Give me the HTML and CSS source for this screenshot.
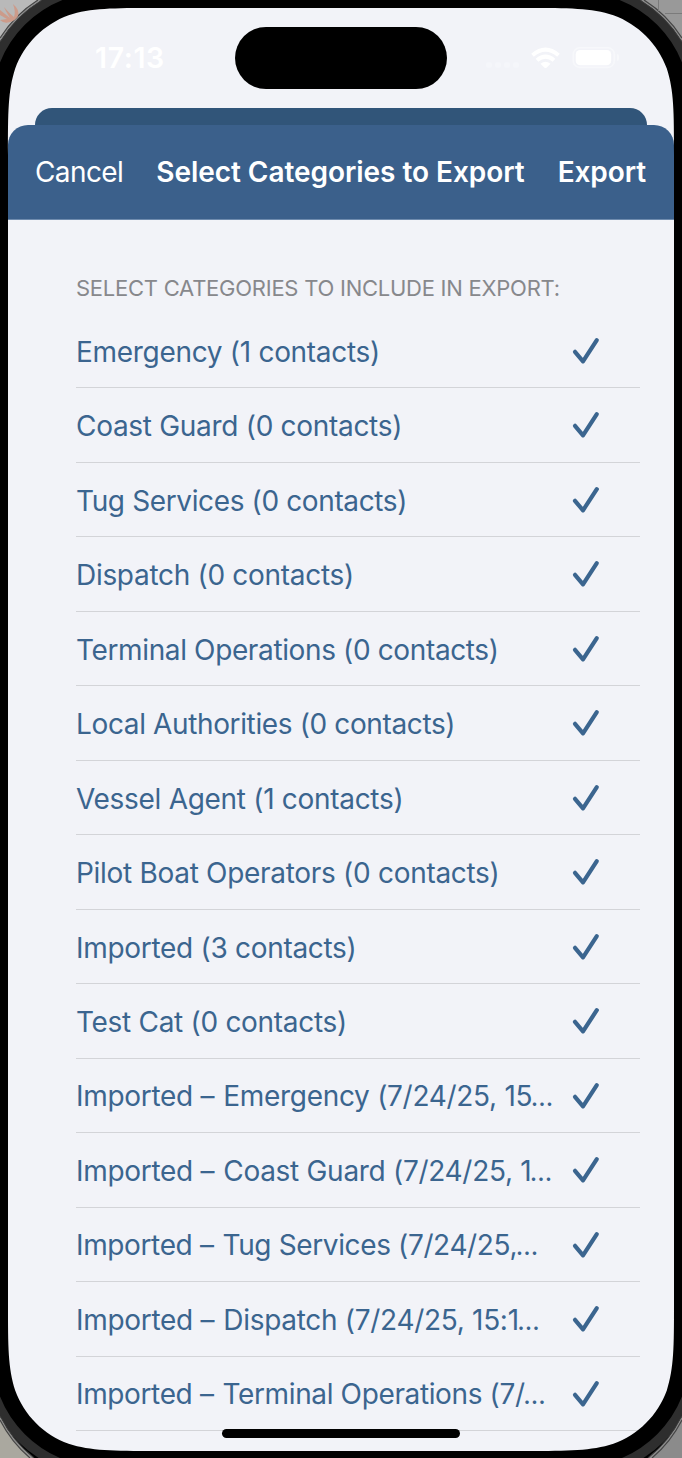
FILE: index.html
```html
<!DOCTYPE html>
<html lang="en">
<head>
<meta charset="utf-8">
<title>Select Categories to Export</title>
<link rel="stylesheet" href="styles.css">
</head>
<body>
<svg class="defs" width="0" height="0"><symbol id="check" viewBox="0 0 28 28"><path d="M3 14.800 11 24.300 24.800 3.200" fill="none" stroke="currentColor" stroke-width="4.200" stroke-linecap="round" stroke-linejoin="round"/></symbol></svg>
<div class="phone">
  <header class="status">
    <span class="time">17:13</span>
    <span class="island"></span>
    <svg class="indicators" width="134" height="24" viewBox="0 0 134 24">
      <g fill="#f5f6fa"><circle cx="7" cy="18" r="3"/><circle cx="16" cy="18" r="3"/><circle cx="25" cy="18" r="3"/><circle cx="34" cy="18" r="3"/></g>
      <g fill="none" stroke="#fff" stroke-width="4"><path d="M50.500 8.200Q63.500 -3 76.500 8.200"/><path d="M55 13.200Q63.500 6 72 13.200"/></g>
      <path d="M58.500 16.800Q63.500 12.800 68.500 16.800L64.500 20.700Q63.500 21.500 62.500 20.700Z" fill="#fff"/>
      <rect x="91.300" y="0.800" width="41" height="19.600" rx="6.500" fill="none" stroke="#f7f8fb" stroke-width="1.600"/>
      <rect x="93.700" y="3" width="35.500" height="15.300" rx="4.500" fill="#fff"/>
    </svg>
    <span class="battery-tip"></span>
  </header>
  <div class="back-sheet"></div>
  <main class="sheet">
    <nav class="navbar">
      <span class="cancel">Cancel</span>
      <h1 class="title">Select Categories to Export</h1>
      <span class="export">Export</span>
    </nav>
    <section class="content">
      <h2 class="heading">SELECT CATEGORIES TO INCLUDE IN EXPORT:</h2>
      <ul class="list">
        <li class="row"><span class="label">Emergency (1 contacts)</span><svg class="check"><use href="#check"/></svg></li>
        <li class="row"><span class="label">Coast Guard (0 contacts)</span><svg class="check"><use href="#check"/></svg></li>
        <li class="row"><span class="label snug">Tug Services (0 contacts)</span><svg class="check"><use href="#check"/></svg></li>
        <li class="row"><span class="label">Dispatch (0 contacts)</span><svg class="check"><use href="#check"/></svg></li>
        <li class="row"><span class="label snug">Terminal Operations (0 contacts)</span><svg class="check"><use href="#check"/></svg></li>
        <li class="row"><span class="label snug">Local Authorities (0 contacts)</span><svg class="check"><use href="#check"/></svg></li>
        <li class="row"><span class="label">Vessel Agent (1 contacts)</span><svg class="check"><use href="#check"/></svg></li>
        <li class="row"><span class="label">Pilot Boat Operators (0 contacts)</span><svg class="check"><use href="#check"/></svg></li>
        <li class="row"><span class="label">Imported (3 contacts)</span><svg class="check"><use href="#check"/></svg></li>
        <li class="row"><span class="label">Test Cat (0 contacts)</span><svg class="check"><use href="#check"/></svg></li>
        <li class="row"><span class="label">Imported <span class="dash">–</span> Emergency (7/24/25, 15<span class="more">…</span></span><svg class="check"><use href="#check"/></svg></li>
        <li class="row"><span class="label">Imported <span class="dash">–</span> Coast Guard (7/24/25, 1<span class="more">…</span></span><svg class="check"><use href="#check"/></svg></li>
        <li class="row"><span class="label snug">Imported <span class="dash">–</span> Tug Services (7/24/25,<span class="more">…</span></span><svg class="check"><use href="#check"/></svg></li>
        <li class="row"><span class="label">Imported <span class="dash">–</span> Dispatch (7/24/25, 15:1<span class="more">…</span></span><svg class="check"><use href="#check"/></svg></li>
        <li class="row"><span class="label snug">Imported <span class="dash">–</span> Terminal Operations (7/<span class="more">…</span></span><svg class="check"><use href="#check"/></svg></li>
      </ul>
    </section>
  </main>
  <svg class="bezel" width="682" height="1458" viewBox="0 0 682 1458">
    <path fill="#000" fill-rule="evenodd" d="M0 0H682V1458H0ZM155 8H527C569 8 591 8 613.400 15.200C638.200 24.200 657.800 43.800 666.800 68.600C674 91 674 112 674 155V1304C674 1347 674 1368 666.800 1390.400C657.800 1415.200 638.200 1434.800 613.400 1443.800C591 1451 569 1451 527 1451H155C113 1451 91 1451 68.600 1443.800C43.800 1434.800 24.200 1415.200 15.200 1390.400C8 1368 8 1347 8 1304V155C8 112 8 91 15.200 68.600C24.200 43.800 43.800 24.200 68.600 15.200C91 8 113 8 155 8Z"/>
    <rect x="-13" y="-13" width="708" height="1485" rx="117" fill="none" stroke="#2e2e2e" stroke-width="10"/>
    <path fill="#b9b9b9" d="M0 0H42A122 122 0 0 0 0 42Z"/>
    <path fill="#999" d="M682 0H640A122 122 0 0 1 682 42Z"/>
    <path fill="#aaa89f" d="M0 1458H34A122 122 0 0 1 0 1416Z"/>
    <path fill="#8b8b8b" d="M682 1458H648A122 122 0 0 0 682 1416Z"/>
    <g fill="none" stroke-width="1.200">
      <path stroke="#3a3a3a" d="M42 0A122 122 0 0 0 0 42M640 0A122 122 0 0 1 682 42M34 1458A122 122 0 0 1 0 1416M648 1458A122 122 0 0 0 682 1416"/>
      <path stroke="#8c8c8c" d="M40 0A122 122 0 0 0 0 40M642 0A122 122 0 0 1 682 40M32 1458A122 122 0 0 1 0 1418M650 1458A122 122 0 0 0 682 1418"/>
      <path stroke="#444" d="M38 0A122 122 0 0 0 0 38M644 0A122 122 0 0 1 682 38M30 1458A122 122 0 0 1 0 1420M652 1458A122 122 0 0 0 682 1420"/>
    </g>
    <path d="M658.500 0V11M665 13.500H682" fill="none" stroke="#7b7b7b"/>
    <path fill="#cc9b8a" d="M0 10Q5 14 10 18Q5 10 4 7Q10 14 14 17Q16 12 13 4Q20 10 18 16Q15 21 10 22Q4 24 0 20L7 19Q2 16 0 15Z"/>
  </svg>
  <div class="home-indicator"></div>
</div>
</body>
</html>
```
FILE: styles.css
```css
* { box-sizing: border-box; }
body { margin: 0; background: #000; font-family: Inter, "Liberation Sans", sans-serif; }
.defs { display: block; }
.phone { position: relative; width: 682px; height: 1458px; padding: 8px 8px 0; overflow: hidden; background: #f2f3f8; }
.status { display: flex; align-items: flex-start; height: 100px; padding: 19px 0 0 87px; color: #fff; }
.time { width: 140px; padding-top: 14px; font-size: 28.500px; font-weight: 600; line-height: 34px; letter-spacing: 0.6px; }
.island { width: 212px; height: 62px; border-radius: 31px; background: #000; }
.indicators { margin: 20px 0 0 35px; }
.battery-tip { width: 2px; height: 7px; margin: 27px 0 0 1px; border-radius: 0 2px 2px 0; background: #f7f8fb; }
.back-sheet { height: 17px; margin: 0 27px; border-radius: 17px 17px 0 0; background: #315579; }
.sheet { height: 1333px; }
.navbar { display: flex; align-items: center; justify-content: space-between; height: 95px; padding: 0 28px; border-radius: 20px 20px 0 0; border-bottom: 1px solid #6f8cae; background: #3b608b; color: #fff; font-size: 28px; line-height: 35px; white-space: nowrap; }
.cancel { margin-left: -1px; letter-spacing: -0.6px; }
.title { margin: 0; font-size: 28px; font-weight: 600; letter-spacing: -0.05px; }
.export { font-weight: 600; letter-spacing: -0.1px; }
.content { padding: 53px 34px 0 68px; }
.heading { margin: 0; height: 40.500px; font-size: 22px; font-weight: 400; line-height: 31px; color: #87888c; white-space: nowrap; letter-spacing: -0.25px; }
.list { margin: 0; padding: 0; list-style: none; }
.row { display: flex; align-items: center; justify-content: space-between; height: 74.500px; padding: 3px 40px 0 0; border-bottom: 1px solid #d3d4d8; color: #3b658f; }
.label { font-size: 28px; line-height: 40px; letter-spacing: -0.3px; white-space: nowrap; }
.snug { letter-spacing: -0.37px; }
.dash { margin-right: 1.500px; }
.more { font-size: 26px; margin-left: -1.500px; }
.check { width: 28px; height: 28px; margin-bottom: 2px; flex: none; }
.bezel { position: absolute; left: 0; top: 0; }
.home-indicator { position: absolute; left: 222px; top: 1429px; width: 238px; height: 9px; border-radius: 5px; background: #000; }
```
